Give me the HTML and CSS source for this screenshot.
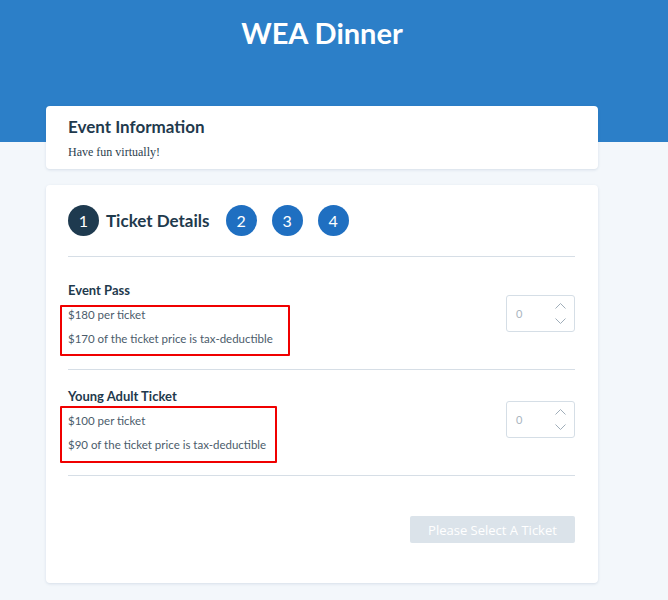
FILE: index.html
```html
<!DOCTYPE html>
<html lang="en">
<head>
<meta charset="utf-8">
<title>WEA Dinner</title>
<link rel="stylesheet" href="styles.css">
</head>
<body>
<header class="hero">
  <h1 class="hero-title">WEA Dinner</h1>
</header>
<main class="main">
  <section class="card info">
    <h2 class="info-title">Event Information</h2>
    <p class="info-text">Have fun virtually!</p>
  </section>
  <section class="card tickets">
    <div class="steps">
      <span class="step step-active">1</span>
      <span class="step-label">Ticket Details</span>
      <span class="step">2</span>
      <span class="step">3</span>
      <span class="step">4</span>
    </div>
    <div class="ticket-list">
      <div class="ticket">
        <div class="ticket-info">
          <div class="ticket-name">Event Pass</div>
          <div class="details">
            <div class="detail-line">$180 per ticket</div>
            <div class="detail-line">$170 of the ticket price is tax-deductible</div>
            <span class="mark mark-1"></span>
          </div>
        </div>
        <div class="qty">
          <span class="qty-value">0</span>
          <svg class="qty-arrows" width="11" height="21" viewBox="0 0 11 21" aria-hidden="true"><polyline points="0.5,5.5 5.5,0.5 10.5,5.5" fill="none" stroke="#9fadb9" stroke-width="1"/><polyline points="0.5,15.5 5.5,20.5 10.5,15.5" fill="none" stroke="#9fadb9" stroke-width="1"/></svg>
        </div>
      </div>
      <div class="ticket">
        <div class="ticket-info">
          <div class="ticket-name">Young Adult Ticket</div>
          <div class="details">
            <div class="detail-line">$100 per ticket</div>
            <div class="detail-line">$90 of the ticket price is tax-deductible</div>
            <span class="mark mark-2"></span>
          </div>
        </div>
        <div class="qty">
          <span class="qty-value">0</span>
          <svg class="qty-arrows" width="11" height="21" viewBox="0 0 11 21" aria-hidden="true"><polyline points="0.5,5.5 5.5,0.5 10.5,5.5" fill="none" stroke="#9fadb9" stroke-width="1"/><polyline points="0.5,15.5 5.5,20.5 10.5,15.5" fill="none" stroke="#9fadb9" stroke-width="1"/></svg>
        </div>
      </div>
    </div>
    <button class="submit" type="button">Please Select A Ticket</button>
  </section>
</main>
</body>
</html>
```
FILE: styles.css
```css
* { box-sizing: border-box; }

body {
  margin: 0;
  background: #f3f7fb;
  font-family: Lato, "Open Sans", sans-serif;
  color: #1f3a4d;
  min-height: 600px;
}

.hero {
  background: #2c7fc8;
  height: 142px;
  padding: 16px 24px 0 0;
  text-align: center;
}

.hero-title {
  margin: 0;
  color: #ffffff;
  font-size: 29px;
  line-height: 34px;
  font-weight: 700;
}

.main {
  width: 552px;
  margin: -36px 0 0 46px;
  display: flex;
  flex-direction: column;
  gap: 16px;
}

.card {
  background: #ffffff;
  border-radius: 4px;
  box-shadow: 0 1px 3px rgba(40, 80, 120, 0.14);
}

.info {
  padding: 10px 22px 9px;
}

.info-title {
  margin: 0;
  font-size: 17px;
  line-height: 22px;
  font-weight: 700;
  color: #1f3a4d;
}

.info-text {
  margin: 6px 0 0;
  font-family: "Liberation Serif", "Times New Roman", serif;
  font-size: 12px;
  line-height: 16px;
  color: #2b3e4e;
}

.tickets {
  padding: 20px 23px 40px 22px;
  display: flex;
  flex-direction: column;
}

.steps {
  display: flex;
  align-items: center;
  padding-bottom: 20px;
  border-bottom: 1px solid #d6dee6;
}

.step {
  width: 31px;
  height: 31px;
  border-radius: 50%;
  background: #1f6fc1;
  color: #ffffff;
  display: flex;
  align-items: center;
  justify-content: center;
  font-size: 16px;
  margin-right: 15px;
}

.step-active {
  background: #1e3a4f;
  margin-right: 7px;
}

.step-label {
  font-size: 17px;
  font-weight: 700;
  color: #1f3a4d;
  margin-right: 16px;
}

.ticket-list {
  margin-top: 7px;
}

.ticket {
  display: flex;
  justify-content: space-between;
  align-items: flex-start;
  padding: 17px 0 18px;
  border-bottom: 1px solid #d6dee6;
}

.ticket-name {
  font-size: 13px;
  line-height: 18px;
  font-weight: 700;
  color: #1f3a4d;
}

.details {
  position: relative;
  margin-top: 4px;
}

.detail-line {
  font-size: 11.5px;
  line-height: 24px;
  color: #4b5c6b;
}

.mark {
  position: absolute;
  left: -8px;
  border: 2px solid #f00000;
  border-radius: 1px;
}

.mark-1 {
  top: 2px;
  bottom: -5px;
  width: 230px;
}

.mark-2 {
  top: -3px;
  bottom: -6px;
  width: 217px;
}

.qty {
  width: 69px;
  height: 37px;
  margin-top: 14px;
  border: 1px solid #d5dee6;
  border-radius: 3px;
  display: flex;
  align-items: center;
  justify-content: space-between;
  padding: 0 8px 0 9px;
}

.qty-value {
  font-size: 11px;
  color: #aab5bf;
}

.qty-arrows {
  display: block;
}

.submit {
  align-self: flex-end;
  margin-top: 40px;
  width: 165px;
  height: 27px;
  border: none;
  border-radius: 2px;
  background: #dbe3ea;
  color: #ffffff;
  font-family: "Open Sans", sans-serif;
  font-size: 13px;
  padding: 0;
}
```
